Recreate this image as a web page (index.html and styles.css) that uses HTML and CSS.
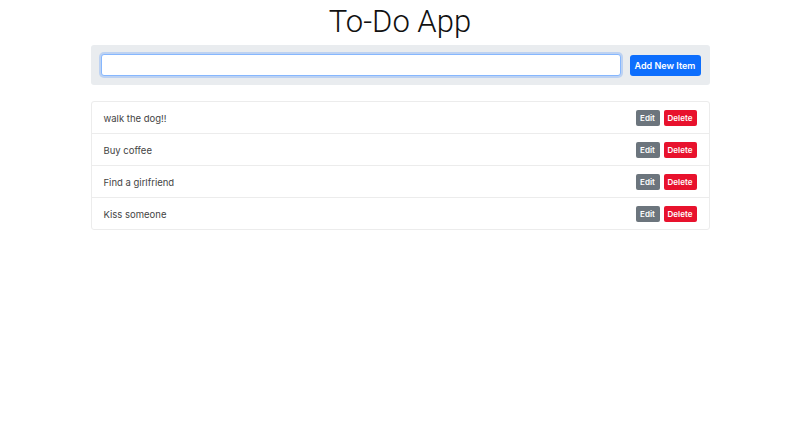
FILE: index.html
```html
<!DOCTYPE html>
<html>
<head>
<meta charset="utf-8">
<link rel="stylesheet" href="styles.css">
</head>
<body>
<div class="container">
  <h1 class="title">To-Do App</h1>
  <div class="add-bar">
    <input class="add-input" type="text">
    <button class="btn btn-primary">Add New Item</button>
  </div>
  <ul class="list">
    <li class="item"><span class="item-text">walk the dog!!</span><span class="actions"><button class="btn-sm btn-edit">Edit</button><button class="btn-sm btn-delete">Delete</button></span></li>
    <li class="item"><span class="item-text">Buy coffee</span><span class="actions"><button class="btn-sm btn-edit">Edit</button><button class="btn-sm btn-delete">Delete</button></span></li>
    <li class="item"><span class="item-text">Find a girlfriend</span><span class="actions"><button class="btn-sm btn-edit">Edit</button><button class="btn-sm btn-delete">Delete</button></span></li>
    <li class="item"><span class="item-text">Kiss someone</span><span class="actions"><button class="btn-sm btn-edit">Edit</button><button class="btn-sm btn-delete">Delete</button></span></li>
  </ul>
</div>
</body>
</html>
```
FILE: styles.css
```css
html, body {
  margin: 0;
  padding: 0;
  background: #fff;
  font-family: Inter, "Liberation Sans", Arial, sans-serif;
  color: #212529;
}
.container {
  width: 619px;
  margin: 0 auto;
  padding-top: 3px;
}
.title {
  margin: 0;
  height: 42px;
  line-height: 38px;
  text-align: center;
  font-family: Roboto, Inter, sans-serif;
  font-weight: 300;
  font-size: 31px;
  color: #111;
}
.add-bar {
  display: flex;
  align-items: center;
  gap: 9px;
  background: #e9ecef;
  padding: 9px;
  border-radius: 3px;
}
.add-input {
  flex: 1;
  height: 22px;
  box-sizing: border-box;
  border: 1px solid #86b7fe;
  border-radius: 3px;
  box-shadow: 0 0 0 2px rgba(13,110,253,0.2);
  background: #fff;
  outline: none;
  margin: 0 0 0 1px;
}
.btn {
  font-family: inherit;
  border: none;
  cursor: pointer;
}
.btn-primary {
  background: #0d6efd;
  color: #fff;
  height: 21px;
  width: 71px;
  padding: 0;
  font-size: 9px;
  font-weight: 600;
  border-radius: 3px;
}
.list {
  list-style: none;
  margin: 16px 0 0 0;
  padding: 0;
  border: 1px solid #ececec;
  border-radius: 3px;
}
.item {
  display: flex;
  align-items: center;
  justify-content: space-between;
  box-sizing: border-box;
  height: 32px;
  padding: 1px 12px 0;
  border-bottom: 1px solid #ececec;
  font-size: 9.5px;
  color: #444;
}
.item:last-child {
  border-bottom: none;
  height: 31px;
}
.actions {
  display: flex;
  gap: 4px;
}
.btn-sm {
  font-family: inherit;
  border: none;
  color: #fff;
  font-size: 8px;
  font-weight: 600;
  height: 16px;
  padding: 0;
  border-radius: 2px;
}
.btn-edit {
  background: #6c757d;
  width: 24px;
}
.btn-delete {
  background: #e8122d;
  width: 33px;
}
```
